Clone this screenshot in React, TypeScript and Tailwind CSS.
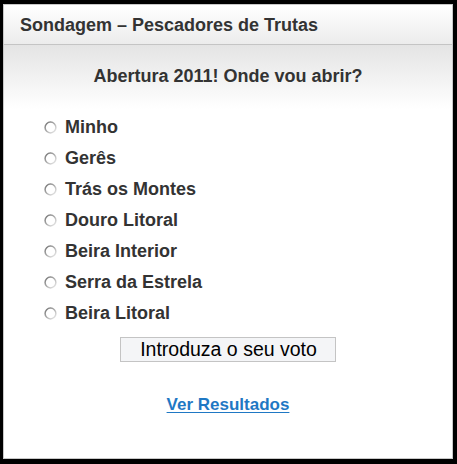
import React from 'react';

const options = [
  'Minho',
  'Gerês',
  'Trás os Montes',
  'Douro Litoral',
  'Beira Interior',
  'Serra da Estrela',
  'Beira Litoral',
];

// Old-style radio circle, darker at the top left
const Radio: React.FC = () => (
  <svg width="13" height="13" viewBox="0 0 13 13" className="shrink-0">
    <defs>
      <linearGradient id="rim" x1="0" y1="0" x2="1" y2="1">
        <stop offset="0" stopColor="#6f6f6f" />
        <stop offset="0.55" stopColor="#b5b5b5" />
        <stop offset="1" stopColor="#f0f0f0" />
      </linearGradient>
    </defs>
    <circle cx="6.5" cy="6.5" r="5.4" fill="#fff" stroke="url(#rim)" strokeWidth="1.5" />
  </svg>
);

const App: React.FC = () => {
  return (
    <div className="w-[457px] h-[464px] bg-black pt-[4px] pl-[3px] pr-[4px] pb-[5px] font-['Liberation_Sans',Arial,sans-serif]">
      <div className="h-full flex flex-col border border-[#c8c8c8] bg-white">
        <div className="h-[40px] flex items-center pl-[16px] bg-gradient-to-b from-white to-[#ececec] border-b border-[#c4c4c4]">
          <h2 className="text-[18px] leading-[22px] font-bold text-[#333] pt-[1px]">Sondagem – Pescadores de Trutas</h2>
        </div>

        <div className="flex-1 flex flex-col bg-[linear-gradient(to_bottom,#e4e4e4_0px,#ffffff_64px)]">
          <p className="mt-[19px] text-center text-[18px] leading-[24px] font-bold text-[#333]">
            Abertura 2011! Onde vou abrir?
          </p>

          <ul className="mt-[30px] pl-[40px] flex flex-col gap-[12px]">
            {options.map((o) => (
              <li key={o} className="flex items-center gap-[8px] h-[19px]">
                <Radio />
                <span className="text-[18px] leading-[19px] font-bold text-[#333]">{o}</span>
              </li>
            ))}
          </ul>

          <div className="mt-[14px] flex justify-center">
            <button className="w-[216px] h-[25px] pl-[1px] bg-[#f4f5f7] border border-[#c4c4c4] text-[19.5px] text-black leading-none">
              Introduza o seu voto
            </button>
          </div>

          <div className="mt-[30px] flex justify-center">
            <a href="#" className="text-[17px] font-bold text-[#1f78c4] underline underline-offset-2">
              Ver Resultados
            </a>
          </div>
        </div>
      </div>
    </div>
  );
};

export default App;
